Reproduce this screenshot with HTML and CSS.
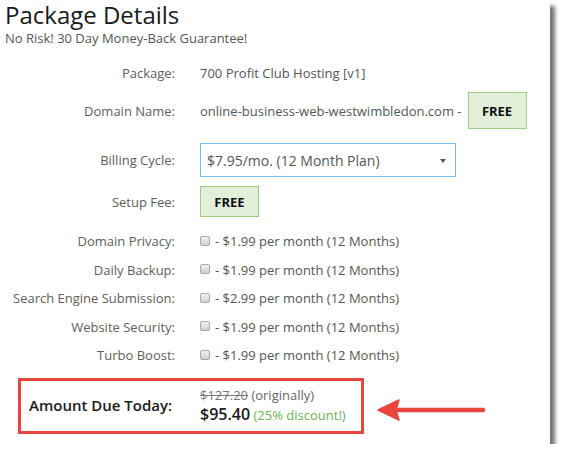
FILE: index.html
```html
<!DOCTYPE html>
<html>
<head>
<meta charset="utf-8">
<link rel="stylesheet" href="styles.css">
</head>
<body>
<div class="panel">
  <h1 class="title">Package Details</h1>
  <p class="subtitle">No Risk! 30 Day Money-Back Guarantee!</p>

  <div class="form">
    <div class="row r-package">
      <div class="label">Package:</div>
      <div class="value">700 Profit Club Hosting [v1]</div>
    </div>
    <div class="row r-domain">
      <div class="label">Domain Name:</div>
      <div class="value">online-business-web-westwimbledon.com - <span class="free free-domain">FREE</span></div>
    </div>
    <div class="row r-billing">
      <div class="label">Billing Cycle:</div>
      <div class="value">
        <div class="select">
          <span>$7.95/mo. (12 Month Plan)</span>
          <span class="caret"></span>
        </div>
      </div>
    </div>
    <div class="row r-setup">
      <div class="label">Setup Fee:</div>
      <div class="value"><span class="free free-setup">FREE</span></div>
    </div>
    <div class="row r-first r-check">
      <div class="label">Domain Privacy:</div>
      <div class="value"><span class="checkbox"></span>- $1.99 per month (12 Months)</div>
    </div>
    <div class="row r-check">
      <div class="label">Daily Backup:</div>
      <div class="value"><span class="checkbox"></span>- $1.99 per month (12 Months)</div>
    </div>
    <div class="row r-check">
      <div class="label">Search Engine Submission:</div>
      <div class="value"><span class="checkbox"></span>- $2.99 per month (12 Months)</div>
    </div>
    <div class="row r-check">
      <div class="label">Website Security:</div>
      <div class="value"><span class="checkbox"></span>- $1.99 per month (12 Months)</div>
    </div>
    <div class="row r-check">
      <div class="label">Turbo Boost:</div>
      <div class="value"><span class="checkbox"></span>- $1.99 per month (12 Months)</div>
    </div>
  </div>

  <div class="due-row">
    <div class="due-box">
      <div class="due-label">Amount Due Today:</div>
      <div class="due-values">
        <div class="orig"><s>$127.20</s> (originally)</div>
        <div class="now"><b>$95.40</b> <span class="disc">(25% discount!)</span></div>
      </div>
    </div>
    <svg class="arrow" width="110" height="24" viewBox="0 0 110 24">
      <path d="M20 12 L106 12" stroke="#e8453c" stroke-width="4.5" stroke-linecap="round" fill="none"/>
      <path d="M1 12 L22 2 L19 12 L22 22 Z" fill="#e8453c" stroke="#e8453c" stroke-width="1.5" stroke-linejoin="round"/>
    </svg>
  </div>
</div>
</body>
</html>
```

FILE: styles.css
```css
html, body {
  margin: 0;
  padding: 0;
  background: #ffffff;
}
body {
  font-family: "Open Sans", "DejaVu Sans", sans-serif;
  color: #555;
  overflow: hidden;
}
.panel {
  width: 550px;
  height: 444px;
  background: #fff;
  box-shadow: 5px 6px 4px rgba(0, 0, 0, 0.55);
  box-sizing: border-box;
  padding-top: 1px;
}
.title {
  margin: 0;
  padding-left: 5px;
  font-size: 24px;
  font-weight: 400;
  line-height: 27px;
  color: #1a1a1a;
}
.subtitle {
  margin: 1px 0 0;
  padding-left: 5px;
  font-size: 13px;
  line-height: 18px;
  color: #555;
}
.form {
  margin-top: 13px;
}
.row {
  display: flex;
  align-items: center;
  font-size: 13px;
}
.label {
  width: 175px;
  text-align: right;
  flex: none;
  color: #5e5e5e;
}
.value {
  margin-left: 25px;
  display: flex;
  align-items: center;
  color: #555;
  white-space: nowrap;
}
.r-package { height: 26px; }
.r-domain { height: 37px; margin-top: 6px; }
.r-billing { height: 34px; margin-top: 14px; }
.r-setup { height: 31px; margin-top: 9px; }
.r-first { margin-top: 10px; }
.r-check { height: 28.5px; }

.free {
  display: inline-flex;
  align-items: center;
  justify-content: center;
  box-sizing: border-box;
  background: #e2f0d9;
  border: 1px solid #9ccf7f;
  color: #111;
  font-weight: 700;
  font-size: 13px;
}
.free-domain {
  width: 59px;
  height: 37px;
  margin-left: 6px;
}
.free-setup {
  width: 59px;
  height: 31px;
}
.select {
  box-sizing: border-box;
  width: 256px;
  height: 34px;
  border: 1px solid #7dbcee;
  display: flex;
  align-items: center;
  justify-content: space-between;
  padding: 0 9px 0 6px;
  font-size: 14px;
  color: #555;
}
.caret {
  width: 0;
  height: 0;
  border-left: 3.5px solid transparent;
  border-right: 3.5px solid transparent;
  border-top: 4px solid #555;
  margin-top: 1px;
}
.checkbox {
  display: inline-block;
  box-sizing: border-box;
  width: 10px;
  height: 10px;
  border: 1px solid #a8a8a8;
  border-radius: 2px;
  background: linear-gradient(#f2f2f2, #cfcfcf);
  margin-right: 5px;
  margin-top: -1px;
}
.due-row {
  display: flex;
  align-items: center;
  margin-top: 8.5px;
  padding-left: 18px;
}
.due-box {
  box-sizing: border-box;
  width: 346px;
  height: 56px;
  border: 3px solid #e8453c;
  display: flex;
  align-items: center;
}
.due-label {
  width: 179px;
  padding-left: 8px;
  box-sizing: border-box;
  font-size: 15px;
  font-weight: 600;
  color: #1a1a1a;
  margin-top: -2px;
}
.due-values {
  display: flex;
  flex-direction: column;
  margin-top: -2px;
}
.orig {
  font-size: 13px;
  line-height: 18px;
  color: #666;
}
.orig s {
  color: #777;
}
.now {
  font-size: 13px;
  line-height: 20px;
}
.now b {
  font-size: 16px;
  font-weight: 600;
  color: #1a1a1a;
}
.disc {
  color: #6ab54a;
}
.arrow {
  margin-left: 13px;
  margin-top: 8px;
  flex: none;
}
```
